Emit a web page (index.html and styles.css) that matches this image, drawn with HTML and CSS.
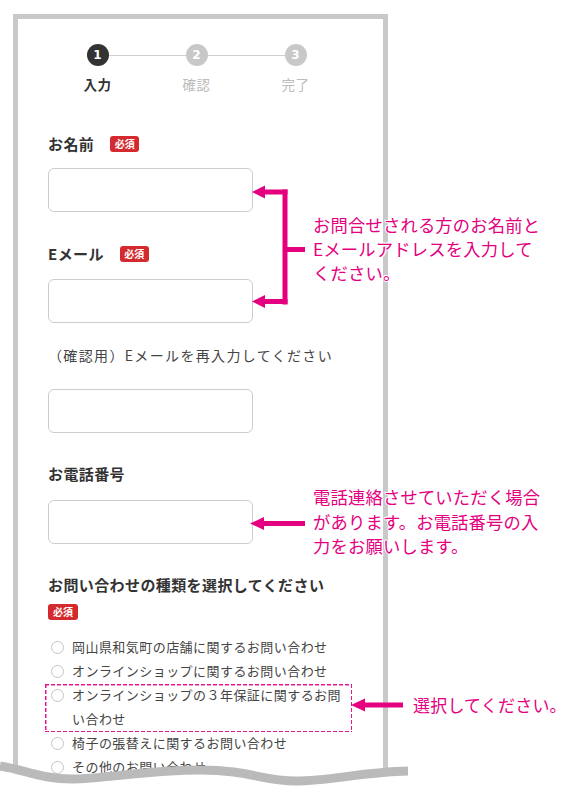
FILE: index.html
```html
<!DOCTYPE html>
<html lang="ja">
<head>
<meta charset="utf-8">
<title>お問い合わせフォーム</title>
<link rel="stylesheet" href="styles.css">
</head>
<body>
<div class="frame">
  <div class="form">
    <ol class="steps">
      <li class="step is-active"><span class="step-num">1</span><span class="step-label">入力</span></li>
      <li class="step"><span class="step-num">2</span><span class="step-label">確認</span></li>
      <li class="step"><span class="step-num">3</span><span class="step-label">完了</span></li>
    </ol>

    <div class="field field-name">
      <div class="label">お名前<span class="badge">必須</span></div>
      <input class="input input-name" type="text">
    </div>

    <div class="field field-mail">
      <div class="label">Eメール<span class="badge">必須</span></div>
      <input class="input input-mail" type="email">
    </div>

    <div class="field field-confirm">
      <div class="sublabel">（確認用）Eメールを再入力してください</div>
      <input class="input input-confirm" type="email">
    </div>

    <div class="field field-tel">
      <div class="label">お電話番号</div>
      <input class="input input-tel" type="tel">
    </div>

    <div class="field field-kind">
      <div class="label">お問い合わせの種類を選択してください</div>
      <span class="badge badge-block">必須</span>
      <ul class="choices">
        <li class="choice"><span class="radio"></span><span class="choice-text">岡山県和気町の店舗に関するお問い合わせ</span></li>
        <li class="choice"><span class="radio"></span><span class="choice-text">オンラインショップに関するお問い合わせ</span></li>
        <li class="choice is-highlight"><span class="radio"></span><span class="choice-text">オンラインショップの３年保証に関するお問い合わせ</span></li>
        <li class="choice"><span class="radio"></span><span class="choice-text">椅子の張替えに関するお問い合わせ</span></li>
        <li class="choice"><span class="radio"></span><span class="choice-text">その他のお問い合わせ</span></li>
      </ul>
    </div>
  </div>
</div>

<svg class="annot-lines" width="579" height="790" viewBox="0 0 579 790" aria-hidden="true">
  <g fill="#e4007f">
    <rect x="260" y="189.5" width="27.5" height="5"/>
    <polygon points="252,192 265,185.5 265,198.5"/>
    <rect x="282.5" y="189.5" width="5" height="115"/>
    <rect x="260" y="299" width="27.5" height="5"/>
    <polygon points="252,301.5 265,295 265,308"/>
    <rect x="287" y="247" width="18" height="5"/>

    <rect x="260" y="521" width="45" height="5"/>
    <polygon points="250,523.5 264,517 264,530"/>

    <rect x="362" y="702.5" width="41" height="5"/>
    <polygon points="351,705 365,698.5 365,711.5"/>
  </g>
</svg>

<p class="note note-1">お問合せされる方のお名前と<br>Eメールアドレスを入力して<br>ください。</p>
<p class="note note-2">電話連絡させていただく場合<br>があります。お電話番号の入<br>力をお願いします。</p>
<p class="note note-3">選択してください。</p>

<svg class="wave" width="579" height="790" viewBox="0 0 579 790" aria-hidden="true">
  <path d="M0,766 C25,770 42,779 72,779 S150,770 200,770 S262,781 296,781 S362,772 408,771 L408,790 L0,790 Z" fill="#fff"/>
  <path d="M0,766 C25,770 42,779 72,779 S150,770 200,770 S262,781 296,781 S362,772 408,771" fill="none" stroke="#bababa" stroke-width="9"/>
</svg>
</body>
</html>
```

FILE: styles.css
```css
html {
  margin: 0;
  height: 790px;
  overflow: hidden;
  background: #fff;
}

body {
  box-sizing: border-box;
  margin: 0;
  padding: 14px 0 0 13px;
  width: 579px;
  height: 790px;
  overflow: hidden;
  background: #fff;
  font-family: "Noto Sans CJK JP", "Noto Sans", sans-serif;
  color: #333;
}

.frame {
  box-sizing: border-box;
  width: 375px;
  height: 800px;
  border: 5px solid #c9c9c9;
  border-bottom: none;
  background: #fff;
}

.form {
  padding: 25px 0 0 30px;
}

/* steps */
.steps {
  list-style: none;
  margin: 0;
  padding: 0;
  display: grid;
  grid-template-columns: repeat(3, 99px);
}

.step {
  position: relative;
  display: flex;
  flex-direction: column;
  align-items: center;
}

.step + .step::before {
  content: "";
  position: absolute;
  top: 11px;
  left: -38.5px;
  width: 77px;
  height: 1px;
  background: #cfcfcf;
}

.step-num {
  width: 22px;
  height: 22px;
  border-radius: 50%;
  background: #c8c8c8;
  color: #fff;
  font-family: "DejaVu Sans", sans-serif;
  font-weight: bold;
  font-size: 12px;
  line-height: 22px;
  text-align: center;
}

.step.is-active .step-num {
  background: #333;
}

.step-label {
  margin-top: 8px;
  font-size: 13.5px;
  line-height: 20px;
  color: #bcbcbc;
  letter-spacing: 0.5px;
}

.step.is-active .step-label {
  color: #333;
  font-weight: bold;
}

/* fields */
.label {
  display: flex;
  align-items: center;
  font-size: 15px;
  font-weight: bold;
  line-height: 24px;
  letter-spacing: 0.4px;
  color: #333;
}

.sublabel {
  font-size: 14px;
  line-height: 24px;
  letter-spacing: 1.35px;
  color: #444;
}

.badge {
  display: inline-block;
  margin-left: 16px;
  padding: 0 4.5px;
  height: 16px;
  border-radius: 3px;
  background: #d42a2e;
  color: #fff;
  font-size: 10px;
  font-weight: bold;
  line-height: 16px;
  letter-spacing: 0;
}

.badge-block {
  margin: 2px 0 0 0;
  padding: 0 5px;
}

.input {
  display: block;
  box-sizing: border-box;
  width: 205px;
  height: 44px;
  margin: 0;
  padding: 0 10px;
  border: 1px solid #cdcdcd;
  border-radius: 6px;
  background: #fff;
  font: inherit;
}

.field-name { margin-top: 38px; }
.input-name { margin-top: 12px; }

.field-mail { margin-top: 30px; }
.input-mail { margin-top: 13px; }

.field-confirm { margin-top: 20px; }
.input-confirm { margin-top: 22px; }

.field-tel { margin-top: 29px; }
.input-tel { margin-top: 14px; }

.field-kind { margin-top: 29px; }

/* choices */
.choices {
  list-style: none;
  margin: 14px 0 0 0;
  padding: 0;
}

.choice {
  display: flex;
  align-items: flex-start;
  gap: 8px;
  font-size: 13px;
  line-height: 24px;
  letter-spacing: 0.45px;
  color: #444;
}

.radio {
  flex: none;
  box-sizing: border-box;
  width: 13px;
  height: 13px;
  margin: 5.5px 0 0 3px;
  border: 1px solid #c4c4c4;
  border-radius: 50%;
  background: #fff;
}

.choice-text {
  width: 275px;
}

.choice.is-highlight {
  position: relative;
}

.choice.is-highlight::after {
  content: "";
  position: absolute;
  left: -3px;
  top: 1px;
  width: 307px;
  height: 48px;
  background:
    repeating-linear-gradient(90deg, #e6178a 0 4px, transparent 4px 6px) left top / 100% 1.5px no-repeat,
    repeating-linear-gradient(90deg, #e6178a 0 4px, transparent 4px 6px) left bottom / 100% 1.5px no-repeat,
    repeating-linear-gradient(180deg, #e6178a 0 4px, transparent 4px 6px) left top / 1.5px 100% no-repeat,
    repeating-linear-gradient(180deg, #e6178a 0 4px, transparent 4px 6px) right top / 1.5px 100% no-repeat;
}

/* annotations */
.annot-lines,
.wave {
  position: absolute;
  left: 0;
  top: 0;
}

.note {
  position: absolute;
  margin: 0;
  color: #e4007f;
  font-size: 17.3px;
  line-height: 24px;
  letter-spacing: 0.2px;
  white-space: nowrap;
  text-shadow: 1px 0 #fff, -1px 0 #fff, 0 1px #fff, 0 -1px #fff, 1px 1px #fff, -1px -1px #fff;
}

.note-1 { left: 313px; top: 213px; }
.note-2 { left: 313px; top: 485px; line-height: 24.5px; }
.note-3 { left: 413px; top: 693px; font-size: 17px; }
```
